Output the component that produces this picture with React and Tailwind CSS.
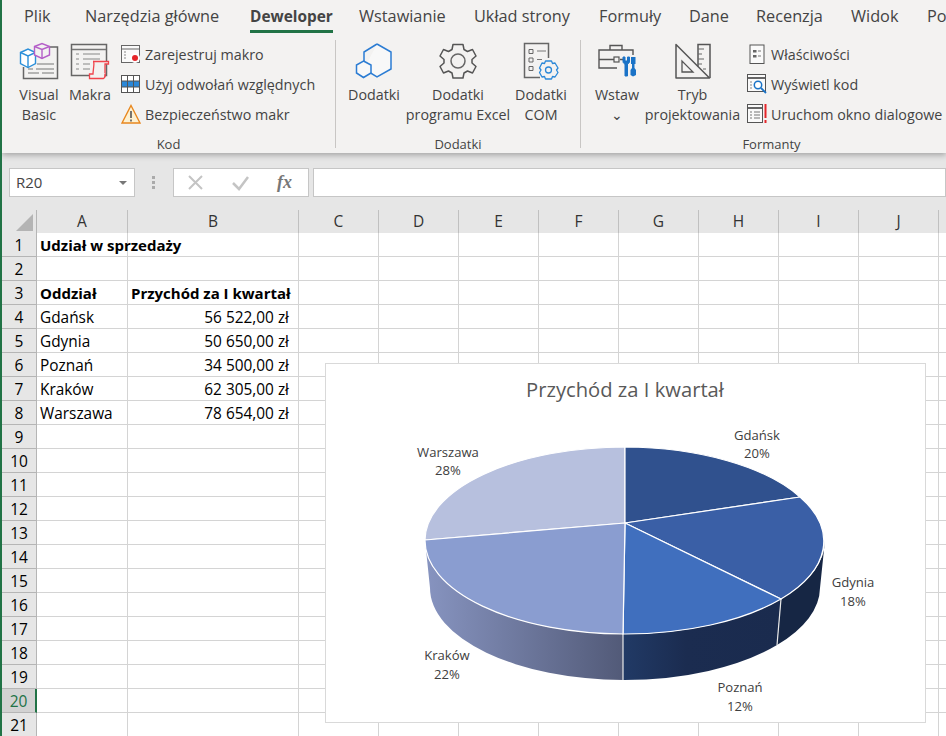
const TABS = [
  { label: "Plik", box: "w-[83px] pl-[22px]" },
  { label: "Narzędzia główne", box: "w-[165px]" },
  { label: "Deweloper", box: "w-[109px] text-[15.4px] font-bold", active: true },
  { label: "Wstawianie", box: "w-[115px]" },
  { label: "Układ strony", box: "w-[125px]" },
  { label: "Formuły", box: "w-[90px]" },
  { label: "Dane", box: "w-[67px]" },
  { label: "Recenzja", box: "w-[95px]" },
  { label: "Widok", box: "w-[76px]" },
  { label: "Po", box: "w-[19px]" },
];

const COLUMNS = ["A", "B", "C", "D", "E", "F", "G", "H", "I", "J", ""];

const CELLS = {
  1: { a: "Udział w sprzedaży", bold: true },
  3: { a: "Oddział", b: "Przychód za I kwartał", bold: true },
  4: { a: "Gdańsk", b: "56 522,00 zł" },
  5: { a: "Gdynia", b: "50 650,00 zł" },
  6: { a: "Poznań", b: "34 500,00 zł" },
  7: { a: "Kraków", b: "62 305,00 zł" },
  8: { a: "Warszawa", b: "78 654,00 zł" },
};

const ROWS = Array.from({ length: 21 }, (_, i) => i + 1);
const EMPTY_COLS = ["C", "D", "E", "F", "G", "H", "I", "J", "K"];

function VisualBasicIcon() {
  return (
    <svg width="40" height="38" viewBox="18 41 40 38" fill="none">
      <path d="M49 46H56.5V77.5H22.5V66" stroke="#666" strokeWidth="1.5" />
      <path d="M36 63H53M27 68H32M35 68H53M27 72H38M41 72H53" stroke="#777" strokeWidth="1.2" />
      <path d="M19.5 51.5L27 48L34.5 51.5V62.5L27 66.5L19.5 62.5Z" fill="#fff" stroke="#2b8fd9" strokeWidth="1.4" />
      <path d="M19.5 51.5L27 55L34.5 51.5M27 55V66.5" stroke="#2b8fd9" strokeWidth="1.4" />
      <path d="M33.5 45.5L41 42.5L48.5 45.5V54L41 57.5L33.5 54Z" fill="#f3f2f1" stroke="#b45fc8" strokeWidth="1.4" />
      <path d="M33.5 45.5L41 48.5L48.5 45.5M41 48.5V57.5" stroke="#b45fc8" strokeWidth="1.4" />
    </svg>
  );
}

function MacroIcon() {
  return (
    <svg width="40" height="38" viewBox="72 44 40 38" fill="none">
      <rect x="73.5" y="46.5" width="35" height="31" stroke="#666" strokeWidth="1.5" />
      <path d="M74 51.5H108" stroke="#777" strokeWidth="1.5" />
      <path d="M78 56H81M85 56H102M78 61H81M85 61H102M78 66H81M85 66H92M78 71H81M85 71H92" stroke="#888" strokeWidth="1.2" />
      <path d="M95 63.5H110.5V66H107V78.5H92V76" fill="#f3f2f1" stroke="#f0444c" strokeWidth="1.3" />
      <path d="M95 63.5C97 63.5 95 72 95 76H91.5V80.5H105.5C107 80 107 78 107 76" fill="#f3f2f1" stroke="#f0444c" strokeWidth="1.3" />
    </svg>
  );
}

function RecordIcon() {
  return (
    <svg width="20" height="20" viewBox="121 44 20 20" fill="none">
      <rect x="121.5" y="45.5" width="18" height="17" fill="#fafafa" stroke="#666" />
      <path d="M122 49H139" stroke="#666" />
      <path d="M124 52H126M124 55H126M124 58H126" stroke="#888" />
      <circle cx="135" cy="58" r="5" fill="#fff" />
      <circle cx="135" cy="58" r="3" fill="#e5252a" />
    </svg>
  );
}

function RelativeIcon() {
  return (
    <svg width="20" height="20" viewBox="121 74 20 20" fill="none">
      <rect x="121.5" y="75.5" width="18" height="17" fill="#fff" stroke="#555" />
      <rect x="122" y="81" width="17" height="6" fill="#2b88d8" />
      <path d="M122 81H139M122 87H139M127.5 76V92M133.5 76V92" stroke="#555" />
    </svg>
  );
}

function WarningIcon() {
  return (
    <svg width="20" height="20" viewBox="120 104 20 20" fill="none">
      <path d="M130 105.5L139 123H121Z" fill="#fdf1d2" stroke="#e8871e" strokeWidth="1.4" />
      <path d="M130 111V118M130 119.5V121.5" stroke="#555" strokeWidth="1.6" />
    </svg>
  );
}

function AddinsIcon() {
  return (
    <svg width="38" height="38" viewBox="356 43 38 38" fill="none">
      <path d="M378 45L392 53V70L378 78L365 70" fill="#f8f8f8" stroke="#2b7cd3" strokeWidth="1.5" />
      <path d="M365 62V53L378 45" stroke="#2b7cd3" strokeWidth="1.5" />
      <path d="M364.5 62L372 66V74L364.5 78.5L357.5 74V66Z" fill="#f8f8f8" stroke="#2b7cd3" strokeWidth="1.5" />
    </svg>
  );
}

function GearIcon() {
  return (
    <svg width="38" height="38" viewBox="439 43 38 38" fill="none">
      <path
        d="M453 45.5H463L464 50.5L467.5 52.5L472.5 50.5L476 57L472 60.5V64L476 67.5L472.5 74L467.5 72L464 74L463 79H453L452 74L448.5 72L443.5 74L440 67.5L444 64V60.5L440 57L443.5 50.5L448.5 52.5L452 50.5Z"
        stroke="#555"
        strokeWidth="1.5"
        strokeLinejoin="round"
      />
      <circle cx="458" cy="62" r="7" stroke="#666" strokeWidth="1.5" />
    </svg>
  );
}

function ComIcon() {
  return (
    <svg width="38" height="38" viewBox="526 44 38 38" fill="none">
      <path d="M552.5 60V45.5H528.5V79.5H544" stroke="#666" strokeWidth="1.5" />
      <path d="M533 51.5H537V55.5H533ZM533 60H537V64H533ZM533 68.5H537V72.5H533Z" stroke="#666" />
      <path d="M541 53H550M541 61.5H546" stroke="#777" />
      <path
        d="M549.5 63H555.5L556.5 65.5L559 65L562 70L560.5 72L562 74.5L559 79L556.5 78.5L555.5 81H549.5L548.5 78.5L546 79L543.5 74.5L545 72L543.5 70L546 65L548.5 65.5Z"
        fill="#f3f2f1"
        stroke="#2b88d8"
        strokeWidth="1.3"
        strokeLinejoin="round"
      />
      <circle cx="552.5" cy="72" r="3" stroke="#2b88d8" strokeWidth="1.3" />
    </svg>
  );
}

function ToolboxIcon() {
  return (
    <svg width="40" height="36" viewBox="598 47 40 36" fill="none">
      <path d="M618 73H600V55H634V60" stroke="#555" strokeWidth="1.4" />
      <path d="M611 55V50.5H623V55M600 64.5H615M621 64.5H624" stroke="#555" strokeWidth="1.4" />
      <rect x="615" y="62" width="5" height="5" stroke="#555" strokeWidth="1.2" />
      <path d="M624 62V66.5C624 68 625.5 69 626 69V81H628.5V69C630 68.5 630.5 67.5 630.5 66V62L628.5 62V66H626V62Z" fill="#1a73c7" stroke="#1a73c7" />
      <path d="M632 62H636.5V69H635.5V73L637 75V80L634 81.5L631.5 80V75L633 73V69H632Z" fill="#1a73c7" />
    </svg>
  );
}

function DesignIcon() {
  return (
    <svg width="38" height="38" viewBox="674 43 38 38" fill="none">
      <path d="M676 45.5V79H709.5Z" stroke="#555" strokeWidth="1.5" strokeLinejoin="round" />
      <path d="M682 62V73H693Z" stroke="#555" strokeWidth="1.3" />
      <path d="M698 67.5V45.5H710V79" stroke="#555" strokeWidth="1.5" />
      <path d="M698 50H704M698 55H702M698 60H704M698 65H702M703 70H706" stroke="#666" strokeWidth="1.1" />
    </svg>
  );
}

function PropertiesIcon() {
  return (
    <svg width="20" height="20" viewBox="747 44 20 20" fill="none">
      <rect x="750" y="45" width="14" height="18.5" fill="#fafafa" stroke="#555" />
      <path d="M753 50H756.5V52.5H753ZM753 55H756.5V57.5H753Z" fill="#666" />
      <path d="M758 51H761M758 56H761" stroke="#777" />
    </svg>
  );
}

function ViewCodeIcon() {
  return (
    <svg width="20" height="20" viewBox="747 74 20 20" fill="none">
      <rect x="747.5" y="74.5" width="18" height="17" fill="#fafafa" stroke="#555" />
      <path d="M748 78H765" stroke="#666" strokeWidth="2" />
      <path d="M750 82H752M750 85H752M750 88H752" stroke="#888" />
      <circle cx="758" cy="85" r="3.7" fill="#fff" stroke="#1a73c7" strokeWidth="1.5" />
      <path d="M761 88L766 93" stroke="#1a73c7" strokeWidth="1.8" />
    </svg>
  );
}

function RunDialogIcon() {
  return (
    <svg width="20" height="20" viewBox="747 104 20 20" fill="none">
      <rect x="747.5" y="104.5" width="15" height="18" fill="#fafafa" stroke="#555" />
      <path d="M748 108H762" stroke="#666" strokeWidth="2" />
      <path d="M750 112H752M754 112H760M750 115H752M754 115H760M750 118H752M754 118H760" stroke="#777" />
      <path d="M765.5 104V118M765.5 120V123" stroke="#e5252a" strokeWidth="2" />
    </svg>
  );
}

function BigButton({ icon, lines, box }) {
  return (
    <div className={`flex flex-col items-center shrink-0 ${box}`}>
      <div className="flex h-[43px] items-start justify-center">{icon}</div>
      {lines.map((line) => (
        <div key={line} className="leading-[20px] whitespace-nowrap">
          {line}
        </div>
      ))}
    </div>
  );
}

function SmallButton({ icon, label }) {
  return (
    <div className="flex h-[30px] items-center whitespace-nowrap">
      <div className="-mt-[2px] flex w-[24px] shrink-0">{icon}</div>
      {label}
    </div>
  );
}

function Group({ label, box, labelBox = "", children }) {
  return (
    <div className={`flex flex-col shrink-0 pt-[7px] ${box}`}>
      <div className="flex h-[92px]">{children}</div>
      <div className={`h-[19px] text-center text-[13px] leading-[20px] ${labelBox}`}>{label}</div>
    </div>
  );
}

function Separator() {
  return <div className="mt-[5px] h-[108px] w-px shrink-0 bg-[#c8c6c4]" />;
}

function Chart() {
  const apex = "625 523";
  return (
    <div className="absolute left-[323px] top-[153px] h-[360px] w-[601px] border border-[#d9d9d9] bg-white">
      <svg width="599" height="358" viewBox="326 364 599 358" fontFamily="'Open Sans', sans-serif">
        <defs>
          <linearGradient id="krakowSide" gradientUnits="userSpaceOnUse" x1="425" y1="0" x2="623" y2="0">
            <stop offset="0" stopColor="#8794c0" />
            <stop offset="1" stopColor="#525a78" />
          </linearGradient>
          <linearGradient id="poznanSide" gradientUnits="userSpaceOnUse" x1="623" y1="0" x2="781" y2="0">
            <stop offset="0" stopColor="#213a66" />
            <stop offset="0.4" stopColor="#1b2c50" />
            <stop offset="1" stopColor="#1a2b4e" />
          </linearGradient>
        </defs>
        <text x="625" y="397" textAnchor="middle" fontSize="20.2" fill="#595959">
          Przychód za I kwartał
        </text>

        <path d="M425 540A200 93.5 0 0 0 623 634L623 680A195 92 0 0 1 430 588Z" fill="url(#krakowSide)" />
        <path d="M623 634A200 93.5 0 0 0 781 599L777 645A195 92 0 0 1 623 680Z" fill="url(#poznanSide)" />
        <path d="M781 599A200 93.5 0 0 0 825 540L820 588A195 92 0 0 1 777 645Z" fill="#162644" />
        <path d="M623 634V680M781 599L777 645" stroke="#e8e8e8" strokeWidth="1.2" />

        <g stroke="#fff" strokeWidth="1.2" strokeLinejoin="round">
          <path d={`M${apex}L625 447A200 93.5 0 0 0 425 540Z`} fill="#b7c0de" />
          <path d={`M${apex}L625 447A200 93.5 0 0 1 800 497Z`} fill="#30518e" />
          <path d={`M${apex}L800 497A200 93.5 0 0 1 781 599Z`} fill="#3a5fa6" />
          <path d={`M${apex}L781 599A200 93.5 0 0 1 623 634Z`} fill="#406fbe" />
          <path d={`M${apex}L623 634A200 93.5 0 0 1 425 540Z`} fill="#8a9dd0" />
        </g>

        <g fontSize="13.1" fill="#404040" textAnchor="middle">
          <text x="757" y="440">Gdańsk</text>
          <text x="757" y="458">20%</text>
          <text x="448" y="457">Warszawa</text>
          <text x="448" y="475">28%</text>
          <text x="853" y="587">Gdynia</text>
          <text x="853" y="606">18%</text>
          <text x="447" y="660">Kraków</text>
          <text x="447" y="679">22%</text>
          <text x="740" y="692">Poznań</text>
          <text x="740" y="711">12%</text>
        </g>
      </svg>
    </div>
  );
}

export default function App() {
  return (
    <div className="h-[736px] w-[946px] overflow-hidden border-l-2 border-[#217346] bg-white font-['Open_Sans',sans-serif] text-[#444]">
      <div className="relative z-10 bg-[#f3f2f1] shadow-[0_2px_6px_rgba(0,0,0,0.3)]">
        <div className="flex h-[35px] whitespace-nowrap text-[16.3px] leading-[33px]">
          {TABS.map(({ label, box, active }) => (
            <div key={label} className={`relative shrink-0 ${box}`}>
              {label}
              {active ? (
                <div className="absolute left-0 top-[30px] h-[3px] w-[83px] bg-[#217346]" />
              ) : null}
            </div>
          ))}
        </div>

        <div className="flex h-[118px] text-[14.3px]">
          <Group label="Kod" box="w-[333px]">
            <BigButton icon={<VisualBasicIcon />} lines={["Visual", "Basic"]} box="ml-[11px] w-[52px]" />
            <BigButton icon={<MacroIcon />} lines={["Makra"]} box="w-[50px]" />
            <div className="-mt-[2px] ml-[6px]">
              <SmallButton icon={<RecordIcon />} label="Zarejestruj makro" />
              <SmallButton icon={<RelativeIcon />} label="Użyj odwołań względnych" />
              <SmallButton icon={<WarningIcon />} label="Bezpieczeństwo makr" />
            </div>
          </Group>
          <Separator />
          <Group label="Dodatki" box="w-[244px]">
            <BigButton icon={<AddinsIcon />} lines={["Dodatki"]} box="ml-[4px] w-[68px]" />
            <BigButton icon={<GearIcon />} lines={["Dodatki", "programu Excel"]} box="w-[100px]" />
            <BigButton icon={<ComIcon />} lines={["Dodatki", "COM"]} box="w-[66px]" />
          </Group>
          <Separator />
          <Group label="Formanty" box="w-[365px]" labelBox="pl-[16px]">
            <BigButton
              icon={<ToolboxIcon />}
              lines={["Wstaw", "⌄"]}
              box="ml-[9px] w-[54px]"
            />
            <BigButton icon={<DesignIcon />} lines={["Tryb", "projektowania"]} box="w-[97px]" />
            <div className="-mt-[2px] ml-[6px]">
              <SmallButton icon={<PropertiesIcon />} label="Właściwości" />
              <SmallButton icon={<ViewCodeIcon />} label="Wyświetl kod" />
              <SmallButton icon={<RunDialogIcon />} label="Uruchom okno dialogowe" />
            </div>
          </Group>
        </div>
      </div>

      <div className="flex h-[57px] items-start bg-[#e6e6e6] pt-[15px]">
        <div className="ml-[7px] flex h-[29px] w-[126px] items-center justify-between border border-[#c6c6c6] bg-white pl-[6px] pr-[7px] text-[15px]">
          R20
          <div className="h-0 w-0 border-x-[4px] border-t-[4px] border-x-transparent border-t-[#777]" />
        </div>
        <div className="ml-[17px] flex h-[29px] flex-col justify-center gap-[2px]">
          <div className="h-[3px] w-[3px] bg-[#aaa]" />
          <div className="h-[3px] w-[3px] bg-[#aaa]" />
          <div className="h-[3px] w-[3px] bg-[#aaa]" />
        </div>
        <div className="ml-[18px] flex h-[29px] w-[136px] items-center border border-[#c6c6c6] bg-white">
          <svg width="134" height="27" viewBox="174 168 134 27" fill="none">
            <path d="M189 175L202 188M202 175L189 188" stroke="#c4c4c4" strokeWidth="2" />
            <path d="M233 182L239 188L248 176" stroke="#c4c4c4" strokeWidth="2.5" />
          </svg>
        </div>
        <div className="-ml-[36px] mr-[17px] w-[23px] pt-[1px] text-center font-['Liberation_Serif',serif] text-[18px] font-bold italic leading-[26px] text-[#777]">
          fx
        </div>
        <div className="h-[29px] flex-1 border border-[#c6c6c6] bg-white" />
      </div>

      <div className="relative">
        <div className="grid grid-cols-[35px_91px_171px_repeat(9,80px)] text-[15.4px] leading-[25px] text-black">
          <div className="flex h-[23px] items-end justify-end border-r border-[#b5b5b5] bg-[#e6e6e6] pb-[2px] pr-[3px]">
            <div className="h-0 w-0 border-b-[17px] border-l-[17px] border-b-[#b4b4b4] border-l-transparent" />
          </div>
          {COLUMNS.map((col, i) => (
            <div
              key={i}
              className="h-[23px] border-r border-[#c0c0c0] bg-[#e6e6e6] text-center text-[15.5px] leading-[23px] text-[#333]"
            >
              {col}
            </div>
          ))}

          {ROWS.map((row) => {
            const cell = CELLS[row] ?? {};
            const weight = cell.bold ? "text-[15px] font-bold" : "";
            return (
              <div key={row} className="contents">
                {row === 20 ? (
                  <div className="h-[24px] border-b border-r-2 border-b-[#b5b5b5] border-r-[#217346] bg-[#d2d2d2] text-center text-[15.5px] text-[#217346]">
                    {row}
                  </div>
                ) : (
                  <div className="h-[24px] border-b border-r border-[#b5b5b5] bg-[#e6e6e6] text-center text-[15.5px]">
                    {row}
                  </div>
                )}
                <div className={`h-[24px] whitespace-nowrap border-b border-r border-[#d4d4d4] pl-[3px] ${weight}`}>
                  {cell.a}
                </div>
                {cell.bold ? (
                  <div className="h-[24px] whitespace-nowrap border-b border-r border-[#d4d4d4] pl-[3px] text-[15px] font-bold">
                    {cell.b}
                  </div>
                ) : (
                  <div className="h-[24px] whitespace-nowrap border-b border-r border-[#d4d4d4] pr-[9px] text-right">
                    {cell.b}
                  </div>
                )}
                {EMPTY_COLS.map((col) => (
                  <div key={col} className="h-[24px] border-b border-r border-[#d4d4d4]" />
                ))}
              </div>
            );
          })}
        </div>
        <Chart />
      </div>
    </div>
  );
}
